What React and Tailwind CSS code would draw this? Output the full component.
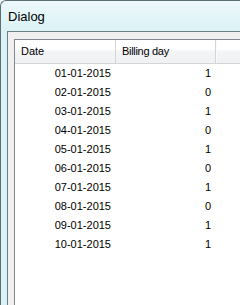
import React from 'react';

const rows = [
  ['01-01-2015', 1],
  ['02-01-2015', 0],
  ['03-01-2015', 1],
  ['04-01-2015', 0],
  ['05-01-2015', 1],
  ['06-01-2015', 0],
  ['07-01-2015', 1],
  ['08-01-2015', 0],
  ['09-01-2015', 1],
  ['10-01-2015', 1],
];

const App = () => {
  return (
    <div className="w-[240px] h-[305px] overflow-hidden bg-white" style={{ fontFamily: '"Liberation Sans", Arial, sans-serif' }}>
      {/* Window frame */}
      <div className="w-[300px] h-[360px] flex flex-col border-l border-t border-[#5b7074] rounded-tl-[6px] bg-[#dcf1f5]">
        {/* Title bar */}
        <div className="h-[30px] flex items-start pl-[7px] pt-[8px] bg-[linear-gradient(to_bottom,#eef9fb_0%,#e3f5f8_50%,#dbf2f5_100%)] rounded-tl-[6px]">
          <span className="text-[13px] leading-[16px] text-black">Dialog</span>
        </div>

        {/* Client area */}
        <div className="flex-1 flex pl-[6px]">
          <div className="flex-1 flex flex-col border-l border-t border-[#6b7f83] bg-[#f0f0f0] pl-[6px] pt-[7px]">
            {/* Table */}
            <div className="flex-1 flex flex-col border-l border-t border-[#828790] bg-white">
              {/* Header */}
              <div className="h-[24px] flex border-b border-[#d5d5d5] bg-[linear-gradient(to_bottom,#ffffff_0%,#ffffff_45%,#f4f5f7_46%,#f0f1f3_100%)] text-[11px] text-black">
                <div className="w-[100px] flex items-center pl-[6px] pb-[1px]">Date</div>
                <div className="w-[1px] bg-[#d5d5d5]" />
                <div className="w-[99px] flex items-center pl-[6px] pb-[1px] tracking-[-0.3px]">Billing day</div>
                <div className="w-[1px] bg-[#d5d5d5]" />
                <div className="w-[1px] bg-[#fbfbfb]" />
                <div className="flex-1" />
              </div>

              {/* Rows */}
              {rows.map(([date, billing]) => (
                <div key={date} className="h-[19px] flex items-center text-[11px] text-black">
                  <div className="w-[100px] text-right pr-[4px]">{date}</div>
                  <div className="w-[100px] text-right pr-[4px]">{billing}</div>
                </div>
              ))}
            </div>
          </div>
        </div>
      </div>
    </div>
  );
};

export default App;
